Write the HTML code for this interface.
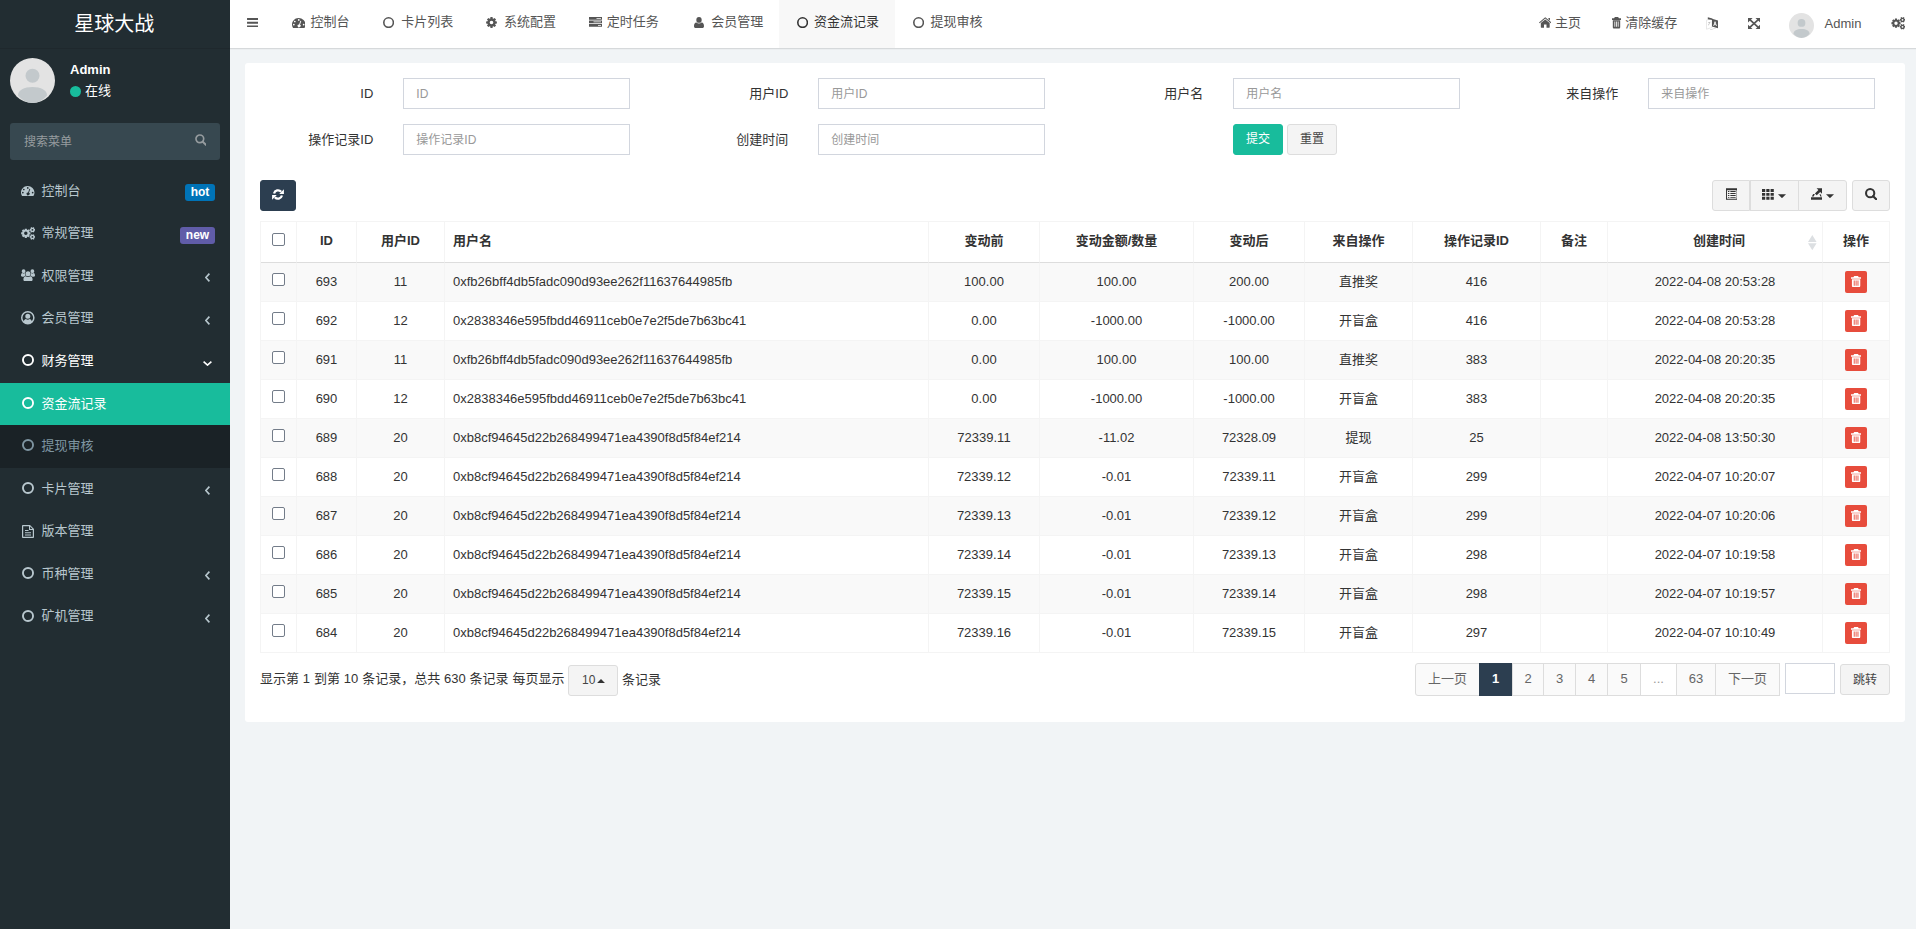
<!DOCTYPE html>
<html lang="zh-CN">
<head>
<meta charset="utf-8">
<title>星球大战</title>
<style>
*{box-sizing:border-box;margin:0;padding:0}
html,body{width:1916px;height:929px;overflow:hidden}
body{font-family:"Liberation Sans","Noto Sans CJK SC",sans-serif;font-size:13px;line-height:1.42857;color:#444;background:#f1f4f6;position:relative}
svg{display:block}
i{font-style:normal}
.abs{position:absolute}
#sidebar{position:absolute;left:0;top:0;width:230px;height:929px;background:#222d32;color:#b8c7ce}
#logo{position:absolute;left:0;top:0;width:230px;height:49px;line-height:48px;padding-right:1.5px;text-align:center;color:#fff;font-size:20px;border-bottom:1px solid #1f282d}
#avatar{position:absolute;left:10px;top:58px;width:45px;height:45px}
#uname{position:absolute;left:70px;top:59.5px;font-size:13px;font-weight:bold;color:#fff;line-height:20px}
#ustat{position:absolute;left:70px;top:82px;font-size:13px;color:#fff;line-height:18px;white-space:nowrap}
#ustat i{display:inline-block;width:11px;height:11px;border-radius:50%;background:#18bc9c;margin-right:4px;vertical-align:-1.7px}
#msearch{position:absolute;left:10px;top:123px;width:210px;height:37px;border-radius:3px;background:#374850;color:#969c9f;font-size:12px;line-height:38.5px;padding-left:14px}
.mi{position:absolute;left:0;width:230px;height:42.57px;line-height:41px;color:#b8c7ce;font-size:13px;white-space:nowrap}
.mi .tx{position:absolute;left:41.5px;top:0}
.mi.on{color:#fff}
.badge{position:absolute;top:15px;height:17px;line-height:17px;border-radius:3px;color:#fff;font-size:12px;font-weight:bold;text-align:center}
#header{position:absolute;left:230px;top:0;width:1686px;height:48px;background:#fff;box-shadow:0 1px 0 rgba(0,0,0,.085),0 2px 0 rgba(0,0,0,.025)}
.tab{position:absolute;top:0;height:48px;line-height:44px;color:#555;font-size:13px;white-space:nowrap}
.tab.on{background:#f8f8f8;color:#333}
.tab .tx{position:absolute;left:35px;top:0}
.hr{position:absolute;top:0;height:48px;line-height:46px;color:#555;font-size:13px;white-space:nowrap}
#panel{position:absolute;left:245px;top:63px;width:1660px;height:659px;background:#fff;border-radius:3px}
.lbl{position:absolute;height:31px;line-height:31px;text-align:right;color:#333;font-size:13px;white-space:nowrap}
.inp{position:absolute;width:226.7px;height:31px;border:1px solid #d2d6de;background:#fff;line-height:30px;padding-left:12px;color:#999;font-size:12px;white-space:nowrap}
.btn{position:absolute;height:31px;border-radius:3px;border:1px solid #ddd;background:#f4f4f4;color:#444;font-size:12px;line-height:28px;text-align:center;white-space:nowrap}
#tbl{position:absolute;left:260px;top:221px;width:1630px;border-collapse:separate;border-spacing:0;table-layout:fixed;font-size:13px;color:#333;border-left:1px solid #f4f4f4;border-top:1px solid #f4f4f4}
#tbl th,#tbl td{border-right:1px solid #f4f4f4;border-bottom:1px solid #f4f4f4;text-align:center;vertical-align:middle;padding:0;white-space:nowrap;overflow:hidden}
#tbl th{height:41px;font-weight:bold;border-bottom:1px solid #ddd;padding-bottom:1px}
#tbl td{height:39px}
#tbl tbody tr:nth-child(odd){background:#f9f9f9}
#tbl .l{text-align:left;padding-left:8px}
.cb{display:inline-block;width:13px;height:13px;border:1px solid #737c89;border-radius:2px;background:#fff;vertical-align:middle;position:relative;top:-3px}
.del{display:inline-block;width:22px;height:22px;border-radius:2px;background:#e74c3c;vertical-align:middle;position:relative}
.sort{position:absolute;right:5.2px;top:2.4px}
.pg{position:absolute;top:663px;height:33px;line-height:29px;border:1px solid #ddd;background:#fafafa;color:#666;text-align:center;font-size:13px;white-space:nowrap}

#tbl th .cb{top:-2px}

</style>
</head>
<body>
<div id="sidebar">
<div id="logo">星球大战</div>
<div id="avatar"><svg width="45" height="45" viewBox="0 0 45 45" style=""><circle cx="22.500" cy="22.500" r="22.500" fill="#e3e3e3"/><circle cx="22.500" cy="17.800" r="7" fill="#c3c9cc"/><path fill="#c3c9cc" d="M8 37.500c0-5.500 6-8.500 14.500-8.500S37 32 37 37.500c-3.500 4.500-9 7.500-14.500 7.500S11.500 42 8 37.500z"/></svg></div>
<div id="uname">Admin</div>
<div id="ustat"><i></i>在线</div>
<div id="msearch">搜索菜单<div class="abs" style="left:184.5px;top:11.2px;"><svg width="11.6" height="11.6" viewBox="0 0 12 12" style=""><circle cx="5" cy="5" r="4" fill="none" stroke="#969c9f" stroke-width="1.7"/><path d="M7.900 7.900L11.200 11.200" stroke="#969c9f" stroke-width="2.100" stroke-linecap="round"/></svg></div></div>
<div class="mi" style="top:169.70px;"><div class="abs" style="left:21.2px;top:16.2px;"><svg preserveAspectRatio="none" width="13.5" height="10.2" viewBox="0 0 14 11" style=""><path fill-rule="evenodd" fill="#b8c7ce" d="M7 0a7 7 0 0 1 7 7c0 1.4-.4 2.7-1.1 3.7a.6.6 0 0 1-.5.3H1.6a.6.6 0 0 1-.5-.3A7 7 0 0 1 7 0zM7 1.2a.9.9 0 1 0 0 1.8.9.9 0 0 0 0-1.8zM2.9 2.9a.9.9 0 1 0 0 1.8.9.9 0 0 0 0-1.8zM1.9 6.3a.9.9 0 1 0 0 1.8.9.9 0 0 0 0-1.8zM12.1 6.3a.9.9 0 1 0 0 1.8.9.9 0 0 0 0-1.8zM9.6 3.2l-.9-.3-1.3 4a1.6 1.6 0 1 0 .9.3z"/></svg></div><span class="tx">控制台</span><span class="badge" style="left:185px;top:14px;width:30px;background:#0073b7">hot</span></div>
<div class="mi" style="top:212.27px;"><div class="abs" style="left:20.8px;top:15px;"><svg width="14.3" height="12.8" viewBox="0 0 14 12.600" style=""><path fill-rule="evenodd" fill="#b8c7ce" d="M8.22 5.07 L9.29 5.19 L9.29 7.21 L8.22 7.33 L7.99 7.89 L8.66 8.73 L7.23 10.16 L6.39 9.49 L5.83 9.72 L5.71 10.79 L3.69 10.79 L3.57 9.72 L3.01 9.49 L2.17 10.16 L0.74 8.73 L1.41 7.89 L1.18 7.33 L0.11 7.21 L0.11 5.19 L1.18 5.07 L1.41 4.51 L0.74 3.67 L2.17 2.24 L3.01 2.91 L3.57 2.68 L3.69 1.61 L5.71 1.61 L5.83 2.68 L6.39 2.91 L7.23 2.24 L8.66 3.67 L7.99 4.51Z M3.00 6.20 a1.70 1.70 0 1 0 3.40 0 a1.70 1.70 0 1 0 -3.40 0Z M13.12 1.96 L13.88 2.00 L13.88 3.60 L13.12 3.64 L12.89 4.04 L13.23 4.73 L11.85 5.52 L11.43 4.89 L10.97 4.89 L10.55 5.52 L9.17 4.73 L9.51 4.04 L9.28 3.64 L8.52 3.60 L8.52 2.00 L9.28 1.96 L9.51 1.56 L9.17 0.87 L10.55 0.08 L10.97 0.71 L11.43 0.71 L11.85 0.08 L13.23 0.87 L12.89 1.56Z M10.30 2.80 a0.90 0.90 0 1 0 1.80 0 a0.90 0.90 0 1 0 -1.80 0Z M13.12 8.96 L13.88 9.00 L13.88 10.60 L13.12 10.64 L12.89 11.04 L13.23 11.73 L11.85 12.52 L11.43 11.89 L10.97 11.89 L10.55 12.52 L9.17 11.73 L9.51 11.04 L9.28 10.64 L8.52 10.60 L8.52 9.00 L9.28 8.96 L9.51 8.56 L9.17 7.87 L10.55 7.08 L10.97 7.71 L11.43 7.71 L11.85 7.08 L13.23 7.87 L12.89 8.56Z M10.30 9.80 a0.90 0.90 0 1 0 1.80 0 a0.90 0.90 0 1 0 -1.80 0Z"/></svg></div><span class="tx">常规管理</span><span class="badge" style="left:180px;width:35px;background:#605ca8">new</span></div>
<div class="mi" style="top:254.84px;"><div class="abs" style="left:20.8px;top:14px;"><svg width="14" height="12.5" viewBox="0 0 14 12.500" style=""><path fill="#b8c7ce" d="M7 2.200a2.500 2.500 0 1 1 0 5 2.500 2.500 0 0 1 0-5zM2.600.3a1.900 1.900 0 1 1 0 3.800 1.900 1.900 0 0 1 0-3.800zM11.400.3a1.900 1.900 0 1 1 0 3.800 1.900 1.900 0 0 1 0-3.800zM4.100 4.100c-.1.300-.1.500-.1.800 0 .7.300 1.400.7 1.900-.900 0-1.600.4-2.100 1H1.500C.6 7.800 0 7.400 0 6.600 0 5.500.3 4 1.300 4c.2 0 .7.500 1.300.5s1.100-.3 1.500-.4zM9.900 4.100c.4.100.9.400 1.500.4S12.500 4 12.700 4C13.700 4 14 5.500 14 6.600c0 .8-.6 1.200-1.500 1.200h-1.100c-.5-.6-1.200-1-2.100-1 .4-.5.700-1.200.7-1.900 0-.3 0-.5-.1-.8zM4.700 7.300c.6.500 1.400.8 2.300.8s1.700-.3 2.300-.8c1.800.1 2.300 1.900 2.300 3.300 0 1.200-.8 1.900-1.900 1.900H4.300c-1.100 0-1.900-.7-1.900-1.900 0-1.400.5-3.200 2.300-3.300z"/></svg></div><span class="tx">权限管理</span><div class="abs" style="left:205px;top:18.3px;"><svg width="5" height="9" viewBox="0 0 5 9" style=""><path fill="none" stroke="#b8c7ce" stroke-width="1.600" d="M4.400.6L.9 4.500l3.500 3.900"/></svg></div></div>
<div class="mi" style="top:297.41px;"><div class="abs" style="left:21px;top:14px;"><svg width="13.6" height="13.6" viewBox="0 0 14 14" style=""><path fill-rule="evenodd" fill="#b8c7ce" d="M7 0a7 7 0 1 1 0 14A7 7 0 0 1 7 0zM7 1.600A5.400 5.400 0 0 0 2.900 10.500C3.300 9.200 4 8.300 5.100 8.200c.5.500 1.200.7 1.900.7s1.400-.2 1.900-.7c1.100.1 1.800 1 2.200 2.300A5.400 5.400 0 0 0 7 1.600zM7 2.900a2.600 2.600 0 1 1 0 5.200 2.600 2.600 0 0 1 0-5.200z"/></svg></div><span class="tx">会员管理</span><div class="abs" style="left:205px;top:18.3px;"><svg width="5" height="9" viewBox="0 0 5 9" style=""><path fill="none" stroke="#b8c7ce" stroke-width="1.600" d="M4.400.6L.9 4.500l3.500 3.900"/></svg></div></div>
<div class="mi on" style="top:339.98px;"><div class="abs" style="left:21.9px;top:14.3px;"><svg width="12" height="12" viewBox="0 0 12 12" style=""><circle cx="6.0" cy="6.0" r="5.05" fill="none" stroke="#fff" stroke-width="1.9"/></svg></div><span class="tx">财务管理</span><div class="abs" style="left:203px;top:20.8px;"><svg width="9" height="5" viewBox="0 0 9 5" style=""><path fill="none" stroke="#fff" stroke-width="1.600" d="M.6.600L4.500 4.100 8.400.6"/></svg></div></div>
<div class="mi" style="top:382.55px;background:#18bc9c;color:#fff;"><div class="abs" style="left:21.9px;top:14.3px;"><svg width="12" height="12" viewBox="0 0 12 12" style=""><circle cx="6.0" cy="6.0" r="5.05" fill="none" stroke="#fff" stroke-width="1.9"/></svg></div><span class="tx">资金流记录</span></div>
<div class="mi" style="top:425.12px;background:#1a2226;color:#7e95a1;"><div class="abs" style="left:21.9px;top:14.3px;"><svg width="12" height="12" viewBox="0 0 12 12" style=""><circle cx="6.0" cy="6.0" r="5.05" fill="none" stroke="#7e95a1" stroke-width="1.9"/></svg></div><span class="tx">提现审核</span></div>
<div class="mi" style="top:467.69px;"><div class="abs" style="left:21.9px;top:14.3px;"><svg width="12" height="12" viewBox="0 0 12 12" style=""><circle cx="6.0" cy="6.0" r="5.05" fill="none" stroke="#b8c7ce" stroke-width="1.9"/></svg></div><span class="tx">卡片管理</span><div class="abs" style="left:205px;top:18.3px;"><svg width="5" height="9" viewBox="0 0 5 9" style=""><path fill="none" stroke="#b8c7ce" stroke-width="1.600" d="M4.400.6L.9 4.500l3.500 3.900"/></svg></div></div>
<div class="mi" style="top:510.26px;"><div class="abs" style="left:22px;top:14.74px;"><svg width="12" height="13" viewBox="0 0 12 13" style=""><path fill-rule="evenodd" fill="#b8c7ce" d="M.8 0h7.200L12 4V12.200c0 .4-.4.800-.8.800H.8C.4 13 0 12.600 0 12.200V.8C0 .4.400 0 .8 0zM1.200 1.200v10.600h9.600V5H7V1.200zM8.100 1.600v2.300h2.300zM3 5h3.500v1H3zM3 7.200h6v1H3zM3 9.400h6v1H3z"/></svg></div><span class="tx">版本管理</span></div>
<div class="mi" style="top:552.83px;"><div class="abs" style="left:21.9px;top:14.3px;"><svg width="12" height="12" viewBox="0 0 12 12" style=""><circle cx="6.0" cy="6.0" r="5.05" fill="none" stroke="#b8c7ce" stroke-width="1.9"/></svg></div><span class="tx">币种管理</span><div class="abs" style="left:205px;top:18.3px;"><svg width="5" height="9" viewBox="0 0 5 9" style=""><path fill="none" stroke="#b8c7ce" stroke-width="1.600" d="M4.400.6L.9 4.500l3.500 3.900"/></svg></div></div>
<div class="mi" style="top:595.40px;"><div class="abs" style="left:21.9px;top:14.3px;"><svg width="12" height="12" viewBox="0 0 12 12" style=""><circle cx="6.0" cy="6.0" r="5.05" fill="none" stroke="#b8c7ce" stroke-width="1.9"/></svg></div><span class="tx">矿机管理</span><div class="abs" style="left:205px;top:18.3px;"><svg width="5" height="9" viewBox="0 0 5 9" style=""><path fill="none" stroke="#b8c7ce" stroke-width="1.600" d="M4.400.6L.9 4.500l3.500 3.900"/></svg></div></div>
</div>
<div id="header">
<div class="abs" style="left:16.7px;top:17.7px;"><svg width="11.5" height="9.5" viewBox="0 0 12 10" style=""><path fill="#555" d="M0 0h12v2H0zM0 4h12v2H0zM0 8h12v2H0z"/></svg></div><div class="tab" style="left:45.4px;width:90.8px"><div class="abs" style="left:16.3px;top:17.8px;"><svg preserveAspectRatio="none" width="13.5" height="10.2" viewBox="0 0 14 11" style=""><path fill-rule="evenodd" fill="#555" d="M7 0a7 7 0 0 1 7 7c0 1.4-.4 2.7-1.1 3.7a.6.6 0 0 1-.5.3H1.6a.6.6 0 0 1-.5-.3A7 7 0 0 1 7 0zM7 1.2a.9.9 0 1 0 0 1.8.9.9 0 0 0 0-1.8zM2.9 2.9a.9.9 0 1 0 0 1.8.9.9 0 0 0 0-1.8zM1.9 6.3a.9.9 0 1 0 0 1.8.9.9 0 0 0 0-1.8zM12.1 6.3a.9.9 0 1 0 0 1.8.9.9 0 0 0 0-1.8zM9.6 3.2l-.9-.3-1.3 4a1.6 1.6 0 1 0 .9.3z"/></svg></div><span class="tx">控制台</span></div>
<div class="tab" style="left:136.2px;width:102.7px"><div class="abs" style="left:17.0px;top:17px;"><svg width="11.2" height="11.2" viewBox="0 0 11.2 11.2" style=""><circle cx="5.6" cy="5.6" r="4.8" fill="none" stroke="#555" stroke-width="1.6"/></svg></div><span class="tx">卡片列表</span></div>
<div class="tab" style="left:238.9px;width:102.9px"><div class="abs" style="left:17.3px;top:16.6px;"><svg width="11" height="11" viewBox="0 0 12 12" style=""><path fill-rule="evenodd" fill="#555" d="M10.31 4.71 L11.88 4.83 L11.88 7.17 L10.31 7.29 L9.96 8.14 L10.99 9.33 L9.33 10.99 L8.14 9.96 L7.29 10.31 L7.17 11.88 L4.83 11.88 L4.71 10.31 L3.86 9.96 L2.67 10.99 L1.01 9.33 L2.04 8.14 L1.69 7.29 L0.12 7.17 L0.12 4.83 L1.69 4.71 L2.04 3.86 L1.01 2.67 L2.67 1.01 L3.86 2.04 L4.71 1.69 L4.83 0.12 L7.17 0.12 L7.29 1.69 L8.14 2.04 L9.33 1.01 L10.99 2.67 L9.96 3.86Z M4.00 6.00 a2.00 2.00 0 1 0 4.00 0 a2.00 2.00 0 1 0 -4.00 0Z"/></svg></div><span class="tx">系统配置</span></div>
<div class="tab" style="left:341.8px;width:104.4px"><div class="abs" style="left:17px;top:17.2px;"><svg preserveAspectRatio="none" width="13" height="9.7" viewBox="0 0 13 11" style=""><path fill-rule="evenodd" fill="#555" d="M0 0h13v3H0zM7.5 1v1H12V1zM0 4h13v3H0zM4.5 5v1H12V5zM0 8h13v3H0zM9 9v1h3V9z"/></svg></div><span class="tx">定时任务</span></div>
<div class="tab" style="left:446.2px;width:102.8px"><div class="abs" style="left:18px;top:16.5px;"><svg width="10" height="11" viewBox="0 0 10 11" style=""><path fill="#555" d="M5 0a2.7 2.9 0 1 1 0 5.8A2.7 2.9 0 0 1 5 0zM2.4 5.6c.7.6 1.6 1 2.6 1s1.900-.4 2.600-1C9.400 5.700 10 7.500 10 9.200 10 10.300 9.300 11 8.300 11H1.700C.7 11 0 10.300 0 9.200c0-1.700.6-3.500 2.400-3.600z"/></svg></div><span class="tx">会员管理</span></div>
<div class="tab on" style="left:549.0px;width:116.0px"><div class="abs" style="left:17.6px;top:17px;"><svg width="11.2" height="11.2" viewBox="0 0 11.2 11.2" style=""><circle cx="5.6" cy="5.6" r="4.8" fill="none" stroke="#333" stroke-width="1.6"/></svg></div><span class="tx">资金流记录</span></div>
<div class="tab" style="left:665.4px;width:102.0px"><div class="abs" style="left:17.6px;top:17px;"><svg width="11.2" height="11.2" viewBox="0 0 11.2 11.2" style=""><circle cx="5.6" cy="5.6" r="4.8" fill="none" stroke="#555" stroke-width="1.6"/></svg></div><span class="tx">提现审核</span></div>
<div class="abs" style="left:1308.5px;top:17px;"><svg width="12.5" height="11" viewBox="0 0 13 11" style=""><path fill="#555" d="M6.500 0L13 5.400l-.700.800L6.500 1.400.700 6.200 0 5.400zM9.800.900h1.600v2.600L9.800 2.200zM6.500 2.300l4.600 3.800V10.500a.5.500 0 0 1-.5.500H7.800V7.700H5.200V11H2.400a.5.500 0 0 1-.5-.5V6.100z"/></svg></div><div class="hr" style="left:1325px">主页</div><div class="abs" style="left:1381.6px;top:17px;"><svg preserveAspectRatio="none" width="9" height="11.5" viewBox="0 0 10 12" style=""><path fill-rule="evenodd" fill="#555" d="M3.200 0h3.600l.900 1.400H10V3H0V1.400h2.300zM.9 3.400h8.200v7.200c0 .8-.6 1.400-1.300 1.400H2.200C1.500 12 .9 11.400.9 10.600zM2.700 4.800v5.500h.9V4.800zM4.550 4.800v5.500h.9V4.800zM6.400 4.800v5.500h.9V4.800z"/></svg></div><div class="hr" style="left:1395.2px">清除缓存</div><div class="abs" style="left:1476.2px;top:16.8px;"><svg width="12.6" height="13.1" viewBox="0 0 12.600 13.100" style=""><path fill="#fff" stroke="#d9d9d9" stroke-width=".6" d="M.5 3.200L6 1.500V10.500L.5 12.200z"/><path fill="#555" d="M1.800.2L6.300 1.600V2.900L1.800 2.300z"/><path fill="#bbb" d="M2.300 5.200l2.200-.5v.8l-.8.200c0 1-.4 2-1.300 2.700l-.4-.5c.7-.6 1-1.300 1-2l-.7.200z"/><path fill="#555" d="M6 1.700L12 3.400V11.300L6 9.600z"/><path fill="#fff" d="M8.600 4.600h.9l1.300 4.500h-.8l-.3-1H8.400l-.3 1h-.8zM8.600 7.400h.9l-.45-1.700z"/><path fill="#ccc" d="M4 12.500L9.500 11l.3.500L4.200 13.100z"/></svg></div><div class="abs" style="left:1517.8px;top:17.8px;"><svg width="12.1" height="11.1" viewBox="0 0 12 11" style=""><path fill="#555" d="M0 0h4.600L0 4.400zM12 0v4.400L7.400 0zM0 11V6.600L4.600 11zM12 11H7.400L12 6.600z"/><path stroke="#555" stroke-width="1.700" d="M1.800 1.700L10.200 9.300M10.200 1.700L1.800 9.300"/></svg></div><div class="abs" style="left:1559px;top:13px;"><svg width="25" height="25" viewBox="0 0 45 45" style=""><circle cx="22.500" cy="22.500" r="22.500" fill="#e3e3e3"/><circle cx="22.500" cy="17.800" r="7" fill="#c3c9cc"/><path fill="#c3c9cc" d="M8 37.500c0-5.500 6-8.500 14.500-8.500S37 32 37 37.500c-3.500 4.500-9 7.500-14.500 7.500S11.500 42 8 37.500z"/></svg></div><div class="hr" style="left:1594.6px;line-height:47.500px">Admin</div><div class="abs" style="left:1660.8px;top:17.1px;"><svg width="14.6" height="12.6" viewBox="0 0 14 12.600" style=""><path fill-rule="evenodd" fill="#555" d="M8.22 5.07 L9.29 5.19 L9.29 7.21 L8.22 7.33 L7.99 7.89 L8.66 8.73 L7.23 10.16 L6.39 9.49 L5.83 9.72 L5.71 10.79 L3.69 10.79 L3.57 9.72 L3.01 9.49 L2.17 10.16 L0.74 8.73 L1.41 7.89 L1.18 7.33 L0.11 7.21 L0.11 5.19 L1.18 5.07 L1.41 4.51 L0.74 3.67 L2.17 2.24 L3.01 2.91 L3.57 2.68 L3.69 1.61 L5.71 1.61 L5.83 2.68 L6.39 2.91 L7.23 2.24 L8.66 3.67 L7.99 4.51Z M3.00 6.20 a1.70 1.70 0 1 0 3.40 0 a1.70 1.70 0 1 0 -3.40 0Z M13.12 1.96 L13.88 2.00 L13.88 3.60 L13.12 3.64 L12.89 4.04 L13.23 4.73 L11.85 5.52 L11.43 4.89 L10.97 4.89 L10.55 5.52 L9.17 4.73 L9.51 4.04 L9.28 3.64 L8.52 3.60 L8.52 2.00 L9.28 1.96 L9.51 1.56 L9.17 0.87 L10.55 0.08 L10.97 0.71 L11.43 0.71 L11.85 0.08 L13.23 0.87 L12.89 1.56Z M10.30 2.80 a0.90 0.90 0 1 0 1.80 0 a0.90 0.90 0 1 0 -1.80 0Z M13.12 8.96 L13.88 9.00 L13.88 10.60 L13.12 10.64 L12.89 11.04 L13.23 11.73 L11.85 12.52 L11.43 11.89 L10.97 11.89 L10.55 12.52 L9.17 11.73 L9.51 11.04 L9.28 10.64 L8.52 10.60 L8.52 9.00 L9.28 8.96 L9.51 8.56 L9.17 7.87 L10.55 7.08 L10.97 7.71 L11.43 7.71 L11.85 7.08 L13.23 7.87 L12.89 8.56Z M10.30 9.80 a0.90 0.90 0 1 0 1.80 0 a0.90 0.90 0 1 0 -1.80 0Z"/></svg></div></div>
<div id="panel"></div>
<div class="lbl" style="left:260px;top:78px;width:113.3px">ID</div><div class="inp" style="left:403.3px;top:78px">ID</div>
<div class="lbl" style="left:675px;top:78px;width:113.3px">用户ID</div><div class="inp" style="left:818.3px;top:78px">用户ID</div>
<div class="lbl" style="left:1090px;top:78px;width:113.3px">用户名</div><div class="inp" style="left:1233.3px;top:78px">用户名</div>
<div class="lbl" style="left:1505px;top:78px;width:113.3px">来自操作</div><div class="inp" style="left:1648.3px;top:78px">来自操作</div>
<div class="lbl" style="left:260px;top:124px;width:113.3px">操作记录ID</div><div class="inp" style="left:403.3px;top:124px">操作记录ID</div>
<div class="lbl" style="left:675px;top:124px;width:113.3px">创建时间</div><div class="inp" style="left:818.3px;top:124px">创建时间</div>
<div class="btn" style="left:1233px;top:124px;width:50px;background:#18bc9c;border-color:#18bc9c;color:#fff">提交</div><div class="btn" style="left:1287px;top:124px;width:50px">重置</div>
<div class="btn" style="left:260px;top:180px;width:36px;background:#2c3e50;border-color:#2c3e50"><div class="abs" style="left:11.1px;top:7.9px;"><svg width="12" height="11" viewBox="0 0 12 11" style=""><path fill="none" stroke="#fff" stroke-width="2.300" d="M2.04 4.44A4.100 4.100 0 0 1 9.140 2.860M9.960 6.560A4.100 4.100 0 0 1 2.860 8.140"/><path fill="#fff" d="M11.900 0.200V4.900H7.200zM0.100 10.800V6.100H4.800z"/></svg></div></div>
<div class="btn" style="left:1712.4px;top:180px;width:38.1px;border-radius:3px 0 0 3px"><div class="abs" style="left:12.4px;top:7.1px;"><svg width="11.6" height="12" viewBox="0 0 12 12" style=""><path fill-rule="evenodd" fill="#333" d="M0 0h12v12H0zM1 2v9h10V2zM2 3h1.500v1H2zM4.500 3H10v1H4.500zM2 5h1.500v1H2zM4.500 5H10v1H4.500zM2 7h1.500v1H2zM4.500 7H10v1H4.500zM2 9h1.500v1H2zM4.500 9H10v1H4.500z"/></svg></div></div><div class="btn" style="left:1749.5px;top:180px;width:49.7px;border-radius:0"><div class="abs" style="left:11.4px;top:8.2px;"><svg preserveAspectRatio="none" width="11.8" height="10.8" viewBox="0 0 11 11" style=""><path fill="#333" d="M0 0h3v3h-3zM4 0h3v3h-3zM8 0h3v3h-3zM0 4h3v3h-3zM4 4h3v3h-3zM8 4h3v3h-3zM0 8h3v3h-3zM4 8h3v3h-3zM8 8h3v3h-3z"/></svg></div><div class="abs" style="left:27.8px;top:12.9px;"><svg width="8" height="4.3" viewBox="0 0 8 4" style=""><path fill="#333" d="M0 0h8L4 4z"/></svg></div></div><div class="btn" style="left:1798.2px;top:180px;width:48.6px;border-radius:0 3px 3px 0"><div class="abs" style="left:11.7px;top:7.1px;"><svg width="11.5" height="12" viewBox="0 0 12 12" style=""><path fill="#333" d="M0 9.300h12V12H0zM0.800 8.600L2.300 6h1.700L2.800 8.600zM11.200 8.600L9.700 6H8.900l.800 2.600zM5.800 0H11.500V5.700L9.600 3.800 6 7.400 4.100 5.500 7.700 1.900z"/></svg></div><div class="abs" style="left:27px;top:12.9px;"><svg width="8" height="4.3" viewBox="0 0 8 4" style=""><path fill="#333" d="M0 0h8L4 4z"/></svg></div></div><div class="btn" style="left:1852px;top:180px;width:37.8px"><div class="abs" style="left:11.7px;top:7.1px;"><svg width="12.4" height="12.4" viewBox="0 0 12 12" style=""><circle cx="5" cy="5" r="4" fill="none" stroke="#333" stroke-width="2"/><path d="M7.900 7.900L11.200 11.200" stroke="#333" stroke-width="2.100" stroke-linecap="round"/></svg></div></div>
<table id="tbl"><colgroup><col style="width:36px"><col style="width:60px"><col style="width:88px"><col style="width:484px"><col style="width:111px"><col style="width:154px"><col style="width:111px"><col style="width:108px"><col style="width:128px"><col style="width:67px"><col style="width:215px"><col style="width:67px"></colgroup>
<thead><tr><th><i class="cb"></i></th><th>ID</th><th>用户ID</th><th class="l">用户名</th><th>变动前</th><th>变动金额/数量</th><th>变动后</th><th>来自操作</th><th>操作记录ID</th><th>备注</th><th><div style="position:relative;padding-left:8px">创建时间<span class="sort"><svg width="8.6" height="15.2" viewBox="0 0 8.600 15.200" style=""><path fill="#dcdfe2" d="M0 6.900h8.600L4.300 0zM0 8.200h8.600L4.300 15.200z"/></svg></span></div></th><th>操作</th></tr></thead>
<tbody>
<tr><td><i class="cb"></i></td><td>693</td><td>11</td><td class="l">0xfb26bff4db5fadc090d93ee262f11637644985fb</td><td>100.00</td><td>100.00</td><td>200.00</td><td>直推奖</td><td>416</td><td></td><td><span class="dt">2022-04-08 20:53:28</span></td><td><span class="del"><div class="abs" style="left:5.9px;top:4.9px;"><svg preserveAspectRatio="none" width="10.2" height="11.3" viewBox="0 0 10 12" style=""><path fill-rule="evenodd" fill="#fff" d="M3.200 0h3.600l.900 1.400H10V3H0V1.400h2.300zM.9 3.400h8.200v7.200c0 .8-.6 1.400-1.300 1.400H2.200C1.500 12 .9 11.400.9 10.600zM2.700 4.800v5.500h.9V4.800zM4.550 4.800v5.500h.9V4.800zM6.400 4.800v5.500h.9V4.800z"/></svg></div></span></td></tr>
<tr><td><i class="cb"></i></td><td>692</td><td>12</td><td class="l">0x2838346e595fbdd46911ceb0e7e2f5de7b63bc41</td><td>0.00</td><td>-1000.00</td><td>-1000.00</td><td>开盲盒</td><td>416</td><td></td><td><span class="dt">2022-04-08 20:53:28</span></td><td><span class="del"><div class="abs" style="left:5.9px;top:4.9px;"><svg preserveAspectRatio="none" width="10.2" height="11.3" viewBox="0 0 10 12" style=""><path fill-rule="evenodd" fill="#fff" d="M3.200 0h3.600l.900 1.400H10V3H0V1.400h2.300zM.9 3.400h8.200v7.200c0 .8-.6 1.400-1.300 1.400H2.200C1.500 12 .9 11.400.9 10.600zM2.700 4.800v5.500h.9V4.800zM4.550 4.800v5.500h.9V4.800zM6.400 4.800v5.500h.9V4.800z"/></svg></div></span></td></tr>
<tr><td><i class="cb"></i></td><td>691</td><td>11</td><td class="l">0xfb26bff4db5fadc090d93ee262f11637644985fb</td><td>0.00</td><td>100.00</td><td>100.00</td><td>直推奖</td><td>383</td><td></td><td><span class="dt">2022-04-08 20:20:35</span></td><td><span class="del"><div class="abs" style="left:5.9px;top:4.9px;"><svg preserveAspectRatio="none" width="10.2" height="11.3" viewBox="0 0 10 12" style=""><path fill-rule="evenodd" fill="#fff" d="M3.200 0h3.600l.900 1.400H10V3H0V1.400h2.300zM.9 3.400h8.200v7.200c0 .8-.6 1.400-1.300 1.400H2.200C1.500 12 .9 11.400.9 10.600zM2.700 4.800v5.500h.9V4.800zM4.550 4.800v5.500h.9V4.800zM6.400 4.800v5.500h.9V4.800z"/></svg></div></span></td></tr>
<tr><td><i class="cb"></i></td><td>690</td><td>12</td><td class="l">0x2838346e595fbdd46911ceb0e7e2f5de7b63bc41</td><td>0.00</td><td>-1000.00</td><td>-1000.00</td><td>开盲盒</td><td>383</td><td></td><td><span class="dt">2022-04-08 20:20:35</span></td><td><span class="del"><div class="abs" style="left:5.9px;top:4.9px;"><svg preserveAspectRatio="none" width="10.2" height="11.3" viewBox="0 0 10 12" style=""><path fill-rule="evenodd" fill="#fff" d="M3.200 0h3.600l.900 1.400H10V3H0V1.400h2.300zM.9 3.400h8.200v7.200c0 .8-.6 1.400-1.300 1.400H2.200C1.500 12 .9 11.400.9 10.600zM2.700 4.800v5.500h.9V4.800zM4.550 4.800v5.500h.9V4.800zM6.400 4.800v5.500h.9V4.800z"/></svg></div></span></td></tr>
<tr><td><i class="cb"></i></td><td>689</td><td>20</td><td class="l">0xb8cf94645d22b268499471ea4390f8d5f84ef214</td><td>72339.11</td><td>-11.02</td><td>72328.09</td><td>提现</td><td>25</td><td></td><td><span class="dt">2022-04-08 13:50:30</span></td><td><span class="del"><div class="abs" style="left:5.9px;top:4.9px;"><svg preserveAspectRatio="none" width="10.2" height="11.3" viewBox="0 0 10 12" style=""><path fill-rule="evenodd" fill="#fff" d="M3.200 0h3.600l.900 1.400H10V3H0V1.400h2.300zM.9 3.400h8.200v7.200c0 .8-.6 1.400-1.300 1.400H2.200C1.500 12 .9 11.400.9 10.600zM2.700 4.800v5.500h.9V4.800zM4.550 4.800v5.500h.9V4.800zM6.400 4.800v5.500h.9V4.800z"/></svg></div></span></td></tr>
<tr><td><i class="cb"></i></td><td>688</td><td>20</td><td class="l">0xb8cf94645d22b268499471ea4390f8d5f84ef214</td><td>72339.12</td><td>-0.01</td><td>72339.11</td><td>开盲盒</td><td>299</td><td></td><td><span class="dt">2022-04-07 10:20:07</span></td><td><span class="del"><div class="abs" style="left:5.9px;top:4.9px;"><svg preserveAspectRatio="none" width="10.2" height="11.3" viewBox="0 0 10 12" style=""><path fill-rule="evenodd" fill="#fff" d="M3.200 0h3.600l.900 1.400H10V3H0V1.400h2.300zM.9 3.400h8.200v7.200c0 .8-.6 1.400-1.300 1.400H2.200C1.500 12 .9 11.400.9 10.600zM2.700 4.800v5.500h.9V4.800zM4.550 4.800v5.500h.9V4.800zM6.400 4.800v5.500h.9V4.800z"/></svg></div></span></td></tr>
<tr><td><i class="cb"></i></td><td>687</td><td>20</td><td class="l">0xb8cf94645d22b268499471ea4390f8d5f84ef214</td><td>72339.13</td><td>-0.01</td><td>72339.12</td><td>开盲盒</td><td>299</td><td></td><td><span class="dt">2022-04-07 10:20:06</span></td><td><span class="del"><div class="abs" style="left:5.9px;top:4.9px;"><svg preserveAspectRatio="none" width="10.2" height="11.3" viewBox="0 0 10 12" style=""><path fill-rule="evenodd" fill="#fff" d="M3.200 0h3.600l.900 1.400H10V3H0V1.400h2.300zM.9 3.400h8.200v7.200c0 .8-.6 1.400-1.300 1.400H2.200C1.500 12 .9 11.400.9 10.600zM2.700 4.800v5.500h.9V4.800zM4.550 4.800v5.500h.9V4.800zM6.400 4.800v5.500h.9V4.800z"/></svg></div></span></td></tr>
<tr><td><i class="cb"></i></td><td>686</td><td>20</td><td class="l">0xb8cf94645d22b268499471ea4390f8d5f84ef214</td><td>72339.14</td><td>-0.01</td><td>72339.13</td><td>开盲盒</td><td>298</td><td></td><td><span class="dt">2022-04-07 10:19:58</span></td><td><span class="del"><div class="abs" style="left:5.9px;top:4.9px;"><svg preserveAspectRatio="none" width="10.2" height="11.3" viewBox="0 0 10 12" style=""><path fill-rule="evenodd" fill="#fff" d="M3.200 0h3.600l.900 1.400H10V3H0V1.400h2.300zM.9 3.400h8.200v7.200c0 .8-.6 1.400-1.300 1.400H2.200C1.500 12 .9 11.400.9 10.600zM2.700 4.800v5.500h.9V4.800zM4.550 4.800v5.500h.9V4.800zM6.400 4.800v5.500h.9V4.800z"/></svg></div></span></td></tr>
<tr><td><i class="cb"></i></td><td>685</td><td>20</td><td class="l">0xb8cf94645d22b268499471ea4390f8d5f84ef214</td><td>72339.15</td><td>-0.01</td><td>72339.14</td><td>开盲盒</td><td>298</td><td></td><td><span class="dt">2022-04-07 10:19:57</span></td><td><span class="del"><div class="abs" style="left:5.9px;top:4.9px;"><svg preserveAspectRatio="none" width="10.2" height="11.3" viewBox="0 0 10 12" style=""><path fill-rule="evenodd" fill="#fff" d="M3.200 0h3.600l.900 1.400H10V3H0V1.400h2.300zM.9 3.400h8.200v7.200c0 .8-.6 1.400-1.300 1.400H2.200C1.500 12 .9 11.400.9 10.600zM2.700 4.800v5.500h.9V4.800zM4.550 4.800v5.500h.9V4.800zM6.400 4.800v5.500h.9V4.800z"/></svg></div></span></td></tr>
<tr><td><i class="cb"></i></td><td>684</td><td>20</td><td class="l">0xb8cf94645d22b268499471ea4390f8d5f84ef214</td><td>72339.16</td><td>-0.01</td><td>72339.15</td><td>开盲盒</td><td>297</td><td></td><td><span class="dt">2022-04-07 10:10:49</span></td><td><span class="del"><div class="abs" style="left:5.9px;top:4.9px;"><svg preserveAspectRatio="none" width="10.2" height="11.3" viewBox="0 0 10 12" style=""><path fill-rule="evenodd" fill="#fff" d="M3.200 0h3.600l.900 1.400H10V3H0V1.400h2.300zM.9 3.400h8.200v7.200c0 .8-.6 1.400-1.300 1.400H2.200C1.500 12 .9 11.400.9 10.600zM2.700 4.800v5.500h.9V4.800zM4.550 4.800v5.500h.9V4.800zM6.400 4.800v5.500h.9V4.800z"/></svg></div></span></td></tr>
</tbody></table>
<div class="abs" style="left:260px;top:669px;line-height:20px;font-size:13px;color:#333;white-space:nowrap;word-spacing:0.25px">显示第 1 到第 10 条记录，总共 630 条记录 每页显示</div><div class="btn" style="left:568px;top:665px;width:50px;height:31px;line-height:28px;text-align:left;padding-left:13px">10<div class="abs" style="left:28px;top:13px;"><svg width="8" height="4.2" viewBox="0 0 8 4" style=""><path fill="#333" d="M0 4h8L4 0z"/></svg></div></div><div class="abs" style="left:622px;top:669.5px;line-height:20px;font-size:13px;color:#333;white-space:nowrap">条记录</div>
<div class="pg" style="left:1415px;width:65px;border-radius:3px 0 0 3px;">上一页</div><div class="pg" style="left:1479px;width:33px;background:#2c3e50;border-color:#2c3e50;color:#fff;font-weight:bold;z-index:2;">1</div><div class="pg" style="left:1512px;width:32px;">2</div><div class="pg" style="left:1543px;width:33px;">3</div><div class="pg" style="left:1575px;width:33px;">4</div><div class="pg" style="left:1607px;width:34px;">5</div><div class="pg" style="left:1640px;width:37px;background:#fff;color:#999;">...</div><div class="pg" style="left:1676px;width:40px;">63</div><div class="pg" style="left:1715px;width:65px;border-radius:0;">下一页</div>
<div class="abs" style="left:1785px;top:663px;width:50px;height:31px;border:1px solid #d2d6de;background:#fff"></div><div class="btn" style="left:1840px;top:664px;width:50px;height:30.500px;line-height:30px">跳转</div>
</body>
</html>
